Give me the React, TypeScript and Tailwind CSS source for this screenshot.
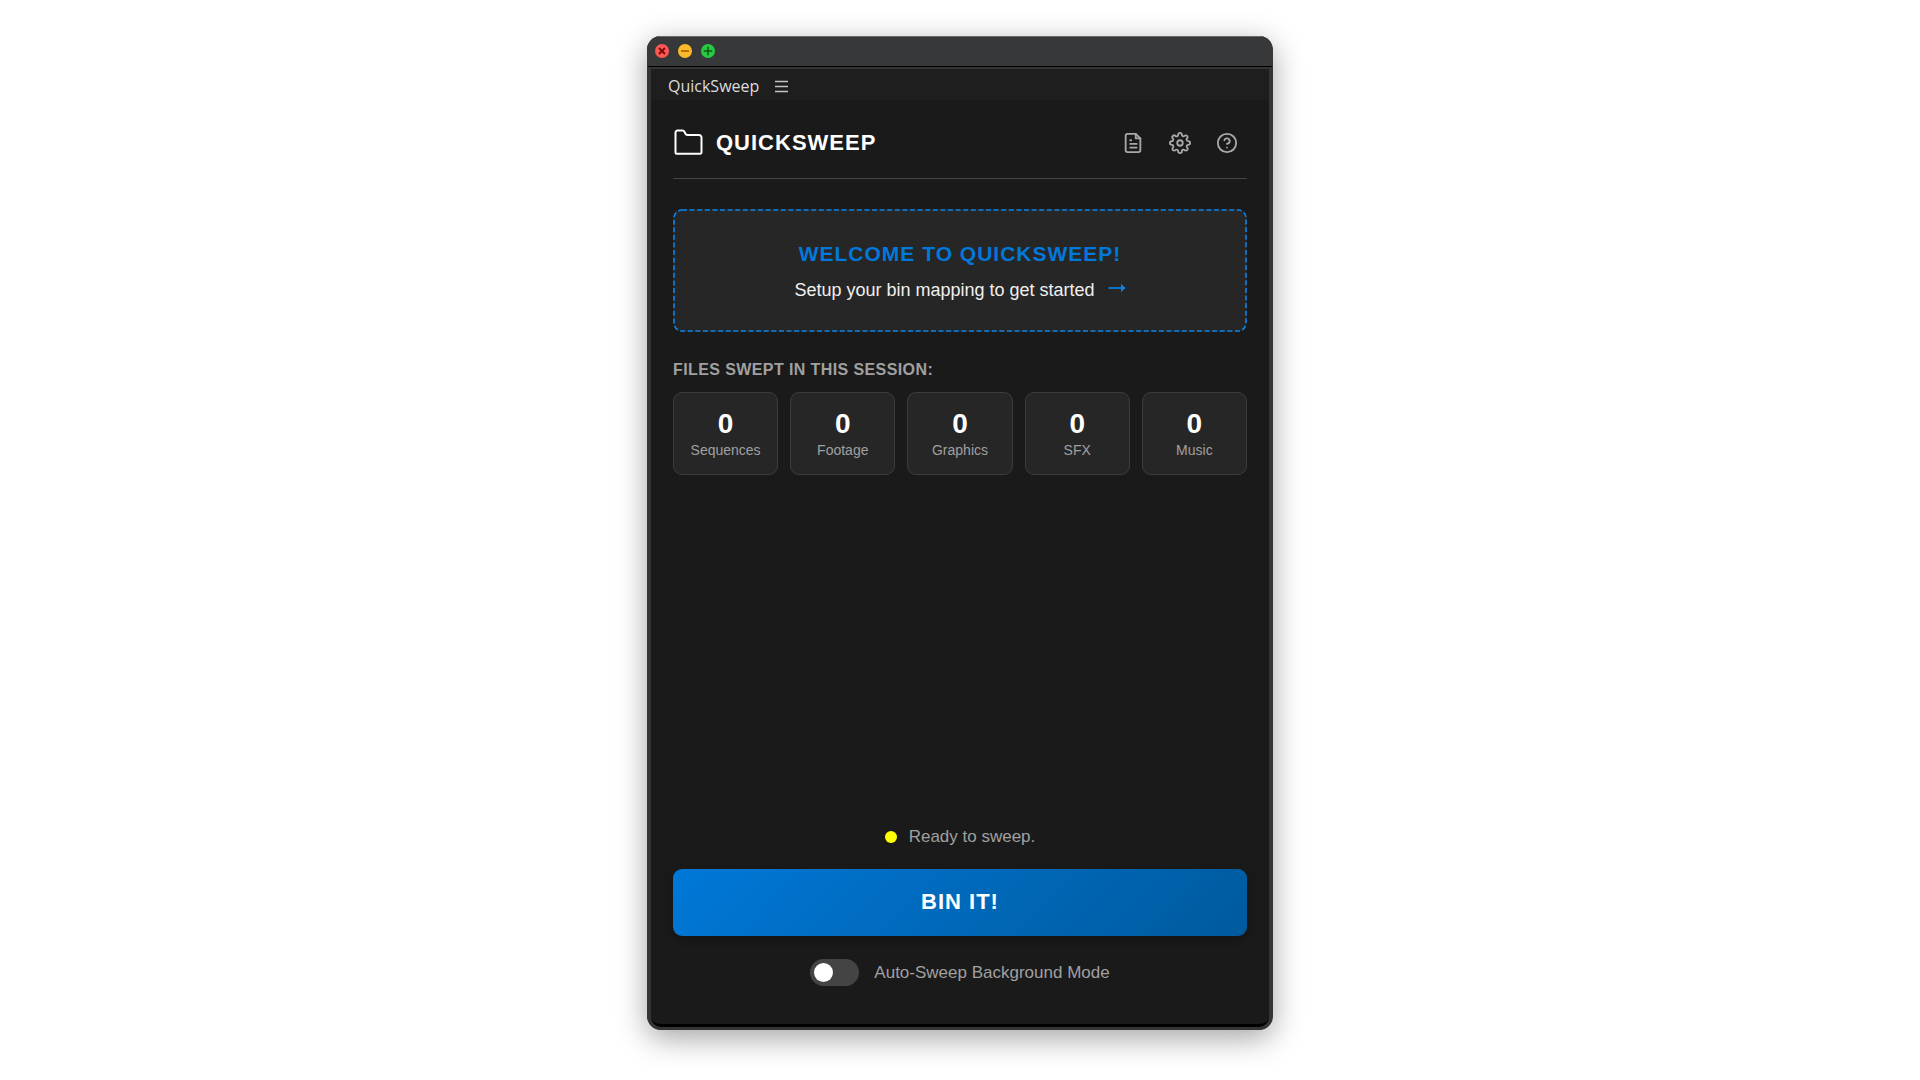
import { useState } from 'react';

const stats = [
  { label: 'Sequences', count: 0 },
  { label: 'Footage', count: 0 },
  { label: 'Graphics', count: 0 },
  { label: 'SFX', count: 0 },
  { label: 'Music', count: 0 },
];

const iconProps = {
  viewBox: '0 0 24 24',
  fill: 'none',
  stroke: 'currentColor',
  strokeWidth: 2,
  strokeLinecap: 'round',
  strokeLinejoin: 'round',
  'aria-hidden': true,
} as const;

function TitleBar() {
  return (
    <div className="flex h-[30px] items-center gap-[9px] border-t border-[#6a6b6d] bg-[#373839] px-2 pb-px">
      <button type="button" aria-label="Close" className="size-[14px] rounded-full bg-[#fc5753]">
        <svg viewBox="0 0 14 14" className="size-full" stroke="#7a0906" strokeWidth="1.9">
          <path d="M4 4l6 6M10 4l-6 6" />
        </svg>
      </button>
      <button type="button" aria-label="Minimize" className="size-[14px] rounded-full bg-[#fdb927]">
        <svg viewBox="0 0 14 14" className="size-full" stroke="#985a00" strokeWidth="1.4">
          <path d="M3 7h8" />
        </svg>
      </button>
      <button type="button" aria-label="Zoom" className="size-[14px] rounded-full bg-[#26c940]">
        <svg viewBox="0 0 14 14" className="size-full" stroke="#0b5a10" strokeWidth="1.5">
          <path d="M2.800 7h8.400M7 2.800v8.400" />
        </svg>
      </button>
    </div>
  );
}

function PanelTab() {
  return (
    <div className="flex h-[31px] items-center gap-4 bg-[#1e1e1e] px-[17px] pt-[3px]">
      <span className="font-['Open_Sans',sans-serif] text-[16px] leading-5 text-[#dcdcdc]">QuickSweep</span>
      <button type="button" aria-label="Panel menu" className="text-[#c4c4c4]">
        <svg viewBox="0 0 13 13" className="size-[13px]" stroke="currentColor" strokeWidth="1.3">
          <path d="M0 1.5h13M0 6.5h13M0 11.5h13" />
        </svg>
      </button>
    </div>
  );
}

function Header() {
  return (
    <header className="flex items-center justify-between border-b border-[#444] pb-[15px]">
      <div className="flex items-center gap-[13px]">
        <svg viewBox="0 0 30 28" className="h-7 w-[30px]" fill="none" stroke="#fff" strokeWidth="2" strokeLinejoin="round">
          <path d="M4.500 1.500H9.500c1 0 1.600.4 2 1.300l.8 1.700c.5 1.100 1.200 1.500 2.300 1.500H26a2.500 2.500 0 0 1 2.500 2.500V23.500a1.200 1.200 0 0 1-1.200 1.200H3.700a1.200 1.200 0 0 1-1.200-1.200V3.500a2 2 0 0 1 2-2z" />
        </svg>
        <h1 className="text-[22px] leading-7 font-bold tracking-[1px] text-white">QUICKSWEEP</h1>
      </div>
      <nav className="flex gap-[7px] text-[#a8a8a8]">
        <button type="button" aria-label="Logs" className="flex size-10 items-center justify-center">
          <svg {...iconProps} className="size-[22px]">
            <path d="M15 2H6a2 2 0 0 0-2 2v16a2 2 0 0 0 2 2h12a2 2 0 0 0 2-2V7z" />
            <path d="M15 2v5h5M16 13H9M16 17H9M10 9H9" />
          </svg>
        </button>
        <button type="button" aria-label="Settings" className="flex size-10 items-center justify-center">
          <svg {...iconProps} className="size-[22px]">
            <circle cx="12" cy="12" r="3" />
            <path d="M19.4 15a1.65 1.65 0 0 0 .33 1.82l.06.06a2 2 0 1 1-2.83 2.83l-.06-.06a1.65 1.65 0 0 0-1.82-.33 1.65 1.65 0 0 0-1 1.51V21a2 2 0 0 1-4 0v-.09A1.65 1.65 0 0 0 9 19.4a1.65 1.65 0 0 0-1.82.33l-.06.06a2 2 0 1 1-2.83-2.83l.06-.06a1.65 1.65 0 0 0 .33-1.82 1.65 1.65 0 0 0-1.51-1H3a2 2 0 0 1 0-4h.09A1.65 1.65 0 0 0 4.6 9a1.65 1.65 0 0 0-.33-1.82l-.06-.06a2 2 0 1 1 2.83-2.83l.06.06a1.65 1.65 0 0 0 1.82.33H9a1.65 1.65 0 0 0 1-1.51V3a2 2 0 0 1 4 0v.09a1.65 1.65 0 0 0 1 1.51 1.65 1.65 0 0 0 1.82-.33l.06-.06a2 2 0 1 1 2.83 2.83l-.06.06a1.65 1.65 0 0 0-.33 1.82V9a1.65 1.65 0 0 0 1.51 1H21a2 2 0 0 1 0 4h-.09a1.65 1.65 0 0 0-1.51 1z" />
          </svg>
        </button>
        <button type="button" aria-label="Help" className="flex size-10 items-center justify-center">
          <svg {...iconProps} className="size-[22px]">
            <circle cx="12" cy="12" r="10" />
            <path d="M9.09 9a3 3 0 0 1 5.83 1c0 2-3 3-3 3M12 17h.01" />
          </svg>
        </button>
      </nav>
    </header>
  );
}

function WelcomeCard() {
  return (
    <section className="relative mt-[30px] flex h-[123px] flex-col items-center justify-center rounded-[9px] bg-[#262626] pt-[2px]">
      {/* Dashed outline, drawn as a stroke so the dashes stay short */}
      <svg className="absolute inset-0 size-full overflow-visible" aria-hidden="true">
        <rect
          x="1"
          y="1"
          rx="8"
          className="h-[calc(100%-2px)] w-[calc(100%-2px)]"
          fill="none"
          stroke="#0a84ea"
          strokeWidth="1.6"
          strokeDasharray="5 2.6"
        />
      </svg>
      <h2 className="text-[21px] leading-7 font-bold tracking-[1px] text-[#0078dc]">WELCOME TO QUICKSWEEP!</h2>
      <a href="#setup" className="mt-2 flex items-center gap-[13px] text-[18px] leading-7 text-[#f0f0f0]">
        Setup your bin mapping to get started
        <svg viewBox="0 0 18 10" className="mb-[3px] h-[10px] w-[18px]" aria-hidden="true">
          <path d="M.5 5h13" stroke="#0a84ea" strokeWidth="1.7" />
          <path d="M13 .8L17.500 5l-4.500 4.200z" fill="#0a84ea" />
        </svg>
      </a>
    </section>
  );
}

export default function App() {
  const [autoSweep, setAutoSweep] = useState(false);

  return (
    <div className="flex min-h-screen flex-col items-center bg-white px-4 pt-9 pb-[50px] font-['Liberation_Sans',Arial,sans-serif]">
      <main className="flex w-full max-w-[626px] flex-1 flex-col overflow-hidden rounded-[14px] bg-[#373839] shadow-[0_8px_30px_rgba(0,0,0,0.36)]">
        <TitleBar />
        <div className="flex flex-1 flex-col rounded-b-[14px] border-x-4 border-b-[3px] border-[#353535]">
          <div className="-mx-[3px] h-px bg-black" />
          <div className="h-[2px] bg-[#333]" />
          <PanelTab />
          <div className="flex flex-1 flex-col rounded-b-[10px] border-b-[3px] border-black bg-[#1a1a1a] px-[22px] pt-[23px] pb-[38px]">
            <Header />
            <WelcomeCard />

            <section className="mt-[29px]">
              <h3 className="text-[16px] leading-[18px] font-bold tracking-wide text-[#a0a0a0]">
                FILES SWEPT IN THIS SESSION:
              </h3>
              <ul className="mt-[13px] grid grid-cols-5 gap-3">
                {stats.map((stat) => (
                  <li
                    key={stat.label}
                    className="flex h-[83px] flex-col items-center justify-center rounded-[9px] border border-[#3c3c3c] bg-[#262626]"
                  >
                    <span className="text-[28px] leading-8 font-bold text-white">{stat.count}</span>
                    <span className="text-[14px] leading-5 text-[#a0a0a0]">{stat.label}</span>
                  </li>
                ))}
              </ul>
            </section>

            <div className="mt-auto flex items-center justify-center gap-3 text-[17px] leading-6 text-[#a0a0a0]" role="status">
              <span className="size-3 rounded-full bg-[#ffff00]" />
              Ready to sweep.
            </div>
            <button
              type="button"
              className="mt-5 h-[67px] rounded-[9px] bg-linear-135 from-[#0078d8] to-[#005a9e] pb-[2px] text-[22px] font-bold tracking-[1px] text-white shadow-[0_4px_10px_rgba(0,0,0,0.25)]"
            >
              BIN IT!
            </button>
            <label className="mt-[23px] flex items-center justify-center gap-[15px] text-[17px] leading-6 text-[#a0a0a0]">
              <input
                type="checkbox"
                role="switch"
                checked={autoSweep}
                onChange={(e) => setAutoSweep(e.target.checked)}
                className="flex h-[27px] w-[49px] appearance-none items-center rounded-full bg-[#444] px-1 before:size-[19px] before:rounded-full before:bg-white before:content-[''] checked:justify-end checked:bg-[#0078d8]"
              />
              Auto-Sweep Background Mode
            </label>
          </div>
        </div>
      </main>
    </div>
  );
}
